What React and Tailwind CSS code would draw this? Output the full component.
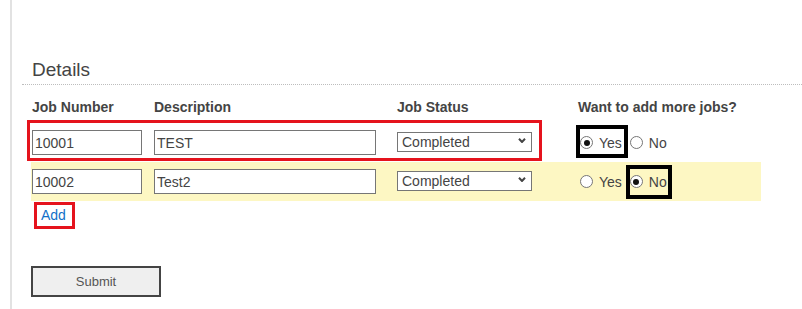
import React, { useState } from 'react';

// --- SMALL FORM PIECES ---

const TextInput = ({ value, width }) => (
  <input
    type="text"
    defaultValue={value}
    className={`${width} h-[25px] border border-[#767676] bg-white px-[2px] text-[14px] text-[#444] outline-none`}
  />
);

const StatusSelect = () => (
  <div className="relative w-[135px] h-[20px]">
    <select
      defaultValue="Completed"
      className="w-full h-full appearance-none border border-[#767676] bg-white pl-[4px] text-[14px] leading-[18px] text-[#444] outline-none"
    >
      <option>Completed</option>
      <option>In Progress</option>
      <option>Pending</option>
    </select>
    <svg className="pointer-events-none absolute right-[6px] top-[8px] h-[5px] w-[8px]" viewBox="0 0 8 5">
      <path d="M1 0.8 L4 4 L7 0.8" fill="none" stroke="#444" strokeWidth="2" />
    </svg>
  </div>
);

const Radio = ({ checked, label, onClick }) => (
  <label className="flex items-center cursor-pointer" onClick={onClick}>
    <span className="flex h-[13px] w-[13px] items-center justify-center rounded-full border border-[#767676] bg-white">
      {checked && <span className="h-[6px] w-[6px] rounded-full bg-[#111]" />}
    </span>
    <span className="ml-[6px] text-[14px] leading-[16px] text-[#444]">{label}</span>
  </label>
);

const JobRow = ({ job, highlight, onChange, children }) => (
  <div
    className={`relative grid grid-cols-[122px_243px_181px_1fr] items-start w-[730px] pl-[1px] py-[7px] ${
      highlight ? 'bg-[#fdf7c3]' : 'bg-white'
    }`}
  >
    <TextInput value={job.number} width="w-[110px]" />
    <TextInput value={job.description} width="w-[222px]" />
    <StatusSelect />
    <div className="flex items-center h-[25px] ml-[2px]">
      <Radio checked={job.more === 'yes'} label="Yes" onClick={() => onChange('yes')} />
      <span className="w-[8px]" />
      <Radio checked={job.more === 'no'} label="No" onClick={() => onChange('no')} />
    </div>
    {children}
  </div>
);

const App = () => {
  const [jobs, setJobs] = useState([
    { number: '10001', description: 'TEST', more: 'yes' },
    { number: '10002', description: 'Test2', more: 'no' },
  ]);

  const setMore = (idx, val) =>
    setJobs(prev => prev.map((j, i) => (i === idx ? { ...j, more: val } : j)));

  return (
    <div className="w-[802px] h-[309px] overflow-hidden bg-white pl-[10px] font-['Liberation_Sans',Arial,sans-serif]">
      <div className="h-full border-l-2 border-[#e2e2e2] pl-[10px] pt-[58px]">
        <h2 className="border-b border-dotted border-[#bdbdbd] pl-[10px] pb-[3px] text-[19px] leading-[23px] font-normal text-[#444]">
          Details
        </h2>

        <div className="pl-[9px] pt-[14px]">
          {/* Column headers */}
          <div className="grid grid-cols-[122px_243px_181px_1fr] pl-[1px] pb-[8px] text-[14px] leading-[16px] font-bold text-[#444]">
            <span>Job Number</span>
            <span>Description</span>
            <span>Job Status</span>
            <span>Want to add more jobs?</span>
          </div>

          <JobRow job={jobs[0]} onChange={v => setMore(0, v)}>
            <div className="pointer-events-none absolute left-[-4px] top-[-3px] w-[515px] h-[41px] border-[3px] border-[#e5131d]" />
            <div className="pointer-events-none absolute left-[545px] top-[2px] w-[52px] h-[33px] border-4 border-black" />
          </JobRow>

          <JobRow job={jobs[1]} highlight onChange={v => setMore(1, v)}>
            <div className="pointer-events-none absolute left-[595px] top-[3px] w-[46px] h-[34px] border-4 border-black" />
          </JobRow>

          <div className="pl-[10px] pt-[6px] leading-[16px]">
            <span className="relative inline-block align-top">
              <a href="#" className="text-[14px] leading-[16px] text-[#1270c8]">Add</a>
              <span className="pointer-events-none absolute left-[-7px] top-[-5px] w-[41px] h-[27px] border-[3px] border-[#e5131d]" />
            </span>
          </div>

          <button
            type="submit"
            className="block mt-[43px] w-[130px] h-[31px] border-2 border-[#444] bg-[#efefef] text-[13px] text-[#555]"
          >
            Submit
          </button>
        </div>
      </div>
    </div>
  );
};

export default App;
